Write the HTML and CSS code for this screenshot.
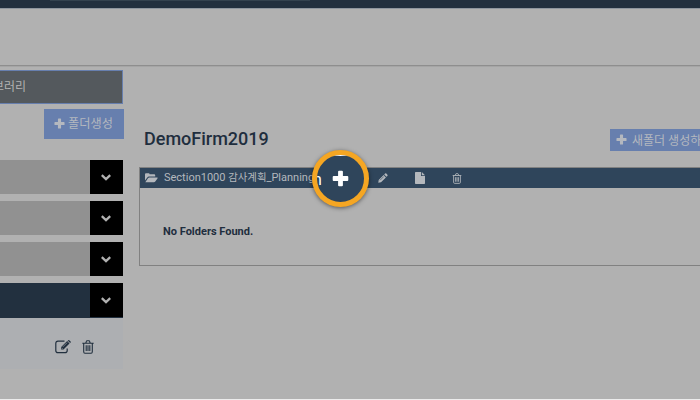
FILE: index.html
```html
<!DOCTYPE html>
<html lang="ko">
<head>
<meta charset="utf-8">
<title>DemoFirm2019</title>
<link rel="stylesheet" href="styles.css">
</head>
<body>
<svg width="0" height="0" class="defs">
  <symbol id="plus" viewBox="0 0 12 12"><path d="M4.3 1.2q0-.7.7-.7h2q.7 0 .7.7v3.1h3.1q.7 0 .7.7v2q0 .7-.7.7H7.7v3.1q0 .7-.7.7H5q-.7 0-.7-.7V7.7H1.2Q.5 7.7.5 7V5q0-.7.7-.7h3.1z" fill="currentColor"/></symbol>
  <symbol id="chev" viewBox="0 0 10 7"><path d="M.8 1.2 5 5.100 9.200 1.200" fill="none" stroke="currentColor" stroke-width="2.300"/></symbol>
  <symbol id="trash" viewBox="0 0 12 14"><path d="M.3 3.2h11.4M3.8 3l.7-1.8q.1-.4.5-.4h2q.4 0 .5.4L8.200 3M1.700 3.400v8.400q0 1.400 1.200 1.400h6.200q1.200 0 1.200-1.400V3.400M4.200 5.300v5.800M6 5.300v5.800M7.800 5.300v5.800" fill="none" stroke="currentColor" stroke-width="1.100"/></symbol>
</svg>
<header class="topbar"><div class="search"></div></header>
<div class="subbar"></div>
<div class="layout">
  <aside class="sidebar">
    <div class="tab">라이브러리</div>
    <button class="btn create"><svg class="plus"><use href="#plus"/></svg>폴더생성</button>
    <ul class="sections">
      <li><span class="toggle"><svg><use href="#chev"/></svg></span></li>
      <li><span class="toggle"><svg><use href="#chev"/></svg></span></li>
      <li><span class="toggle"><svg><use href="#chev"/></svg></span></li>
      <li class="active"><span class="toggle"><svg><use href="#chev"/></svg></span></li>
    </ul>
    <div class="actions">
      <svg class="edit" viewBox="0 0 16 14"><path d="M9.500 1.200H3Q.8 1.200.8 3.400v7Q.8 12.600 3 12.600h7q2.200 0 2.200-2.200V8.500" fill="none" stroke="currentColor" stroke-width="1.200"/><path d="M6.200 7.100 12.200 1.100l2.300 2.300-6 6H6.200z" fill="currentColor"/><path d="m12.700.6.5-.4q.5-.4 1 0l1.400 1.400q.4.500 0 1l-.5.5z" fill="currentColor"/><path d="m7.800 6.900 4.200-4.200M6.800 7.900l.9.900" stroke="#adafb2" stroke-width=".6"/></svg>
      <svg class="bin"><use href="#trash"/></svg>
    </div>
  </aside>
  <main class="content">
    <div class="heading">
      <h1>DemoFirm2019</h1>
      <button class="btn new"><svg class="plus"><use href="#plus"/></svg>새폴더 생성하기</button>
    </div>
    <section class="panel">
      <div class="panel-head">
        <svg class="folder" viewBox="0 0 13 10"><path d="M0 7.500V1.300Q0 .3 1 .3h2.700q.9 0 .9 1h4.600q1 0 1 1v1.300H4Q2.900 3.600 2.300 4.400z" fill="currentColor"/><path d="M.3 9.300 3 5.300q.5-.8 1.400-.8h7.800q.8 0 .4.700l-2.300 3.400q-.5.700-1.400.7z" fill="currentColor"/></svg>
        <span class="name">Section1000 <span class="ko">감사계획</span>_Planning</span>
        <svg class="pencil" viewBox="0 0 10 10"><path d="M.3 9.700.7 7l4.900-4.900L7.900 4.400 3 9.300zM6.200 1.500 7.100.6q.6-.5 1.200 0l1.100 1.100q.5.600 0 1.200l-.9.900z" fill="currentColor"/><path d="m2 7.300 3.800-3.800" stroke="#2f455b" stroke-width=".6"/></svg>
        <svg class="page" viewBox="0 0 10 12"><path d="M.7 0H6v4h4v7.300q0 .7-.7.700H.7Q0 12 0 11.300V.7Q0 0 .7 0zM6.800 0 10 3.200H6.800z" fill="currentColor"/></svg>
        <svg class="trash" viewBox="0 0 12 14"><use href="#trash"/></svg>
        <div class="spot"><span>n</span><svg><use href="#plus"/></svg></div>
      </div>
      <p>No Folders Found.</p>
    </section>
  </main>
</div>
</body>
</html>
```
FILE: styles.css
```css
* { box-sizing: border-box; }
body {
  margin: 0;
  height: 400px;
  overflow: hidden;
  background: #b1b1b1;
  border-bottom: 1px solid #ececec;
  color: #1f2e3e;
  font-family: Roboto, "Noto Sans CJK KR", sans-serif;
}
.defs { display: none; }
svg { display: block; flex: none; }
.topbar { height: 8px; background: #22303f; padding-left: 50px; }
.search { width: 260px; height: 1px; background: #33424f; }
.subbar {
  height: 59px;
  border-top: 1px solid #8e969f;
  border-bottom: 1px solid #a5a5a5;
  box-shadow: inset 0 -1px #8e8e8e;
}
.layout { display: flex; padding-top: 3px; }
.sidebar { width: 124px; flex: none; display: flex; flex-direction: column; }
.tab {
  width: 123px;
  height: 34px;
  background: #54595d;
  border: 1px solid #677fae;
  border-left: 0;
  color: #b1b1b1;
  font-size: 12px;
  line-height: 32px;
  white-space: nowrap;
  display: flex;
  justify-content: flex-end;
  padding-right: 96px;
}
.btn {
  border: 0;
  background: #677fae;
  color: #b4b8bf;
  font: 12px Roboto, "Noto Sans CJK KR", sans-serif;
  display: flex;
  align-items: center;
  white-space: nowrap;
}
.create { width: 80px; height: 30px; margin: 5px 0 21px 44px; padding: 0 0 2px 10px; gap: 3px; font-size: 12.2px; }
.plus { width: 11px; height: 11px; }
.sections { list-style: none; margin: 0; padding: 0; width: 123px; display: flex; flex-direction: column; gap: 7px; }
.sections li { height: 34px; background: #919191; display: flex; justify-content: flex-end; }
.sections .active { background: #22303f; height: 35px; }
.toggle { width: 33px; height: 34px; background: #000; color: #b1b1b1; display: flex; align-items: center; padding-left: 11px; }
.toggle svg { width: 10px; height: 7px; }
.actions { width: 123px; height: 51px; background: #adafb2; display: flex; align-items: center; padding: 6px 0 0 55px; gap: 11px; color: #22303f; }
.edit { width: 16px; height: 14px; }
.bin { width: 12px; height: 14px; }
.content { flex: 1; min-width: 0; padding: 59px 0 0 15px; }
.heading { height: 38px; display: flex; justify-content: space-between; align-items: flex-start; padding-left: 5px; }
h1 { margin: -2px 0 0; font-size: 18px; line-height: 24px; font-weight: 500; }
.new { width: 90px; height: 22px; padding: 0 0 1px 6px; gap: 5px; overflow: hidden; }
.panel { height: 99px; border: 1px solid #818181; border-right: 0; }
.panel-head { height: 20px; background: #2f455b; color: #b4b8bd; display: flex; align-items: center; padding-left: 5px; position: relative; }
.folder { width: 13px; height: 10px; }
.name { width: 214px; margin-left: 6px; font-size: 11px; line-height: 20px; white-space: nowrap; }
.ko { font-size: 10.4px; }
.pencil { width: 10px; height: 10px; }
.page { width: 10px; height: 12px; margin-left: 27px; }
.trash { width: 10px; height: 11px; margin-left: 27px; }
.spot {
  position: absolute;
  left: 172px;
  top: -18px;
  width: 57px;
  height: 57px;
  border: 5px solid #f5a623;
  border-radius: 50%;
  background: #2f455b;
  box-shadow: 0 1px 4px rgba(0, 0, 0, .5);
  color: #fff;
  overflow: hidden;
  display: grid;
  place-items: center;
}
.spot::before { content: ""; position: absolute; left: 0; right: 0; top: 0; height: 1px; background: #fff; }
.spot span { position: absolute; left: -4px; top: 15px; font-size: 16px; line-height: 20px; }
.spot svg { width: 17px; height: 17px; }
.panel p { margin: 37px 0 0 23px; font-size: 11px; line-height: 14px; font-weight: 700; }
```
